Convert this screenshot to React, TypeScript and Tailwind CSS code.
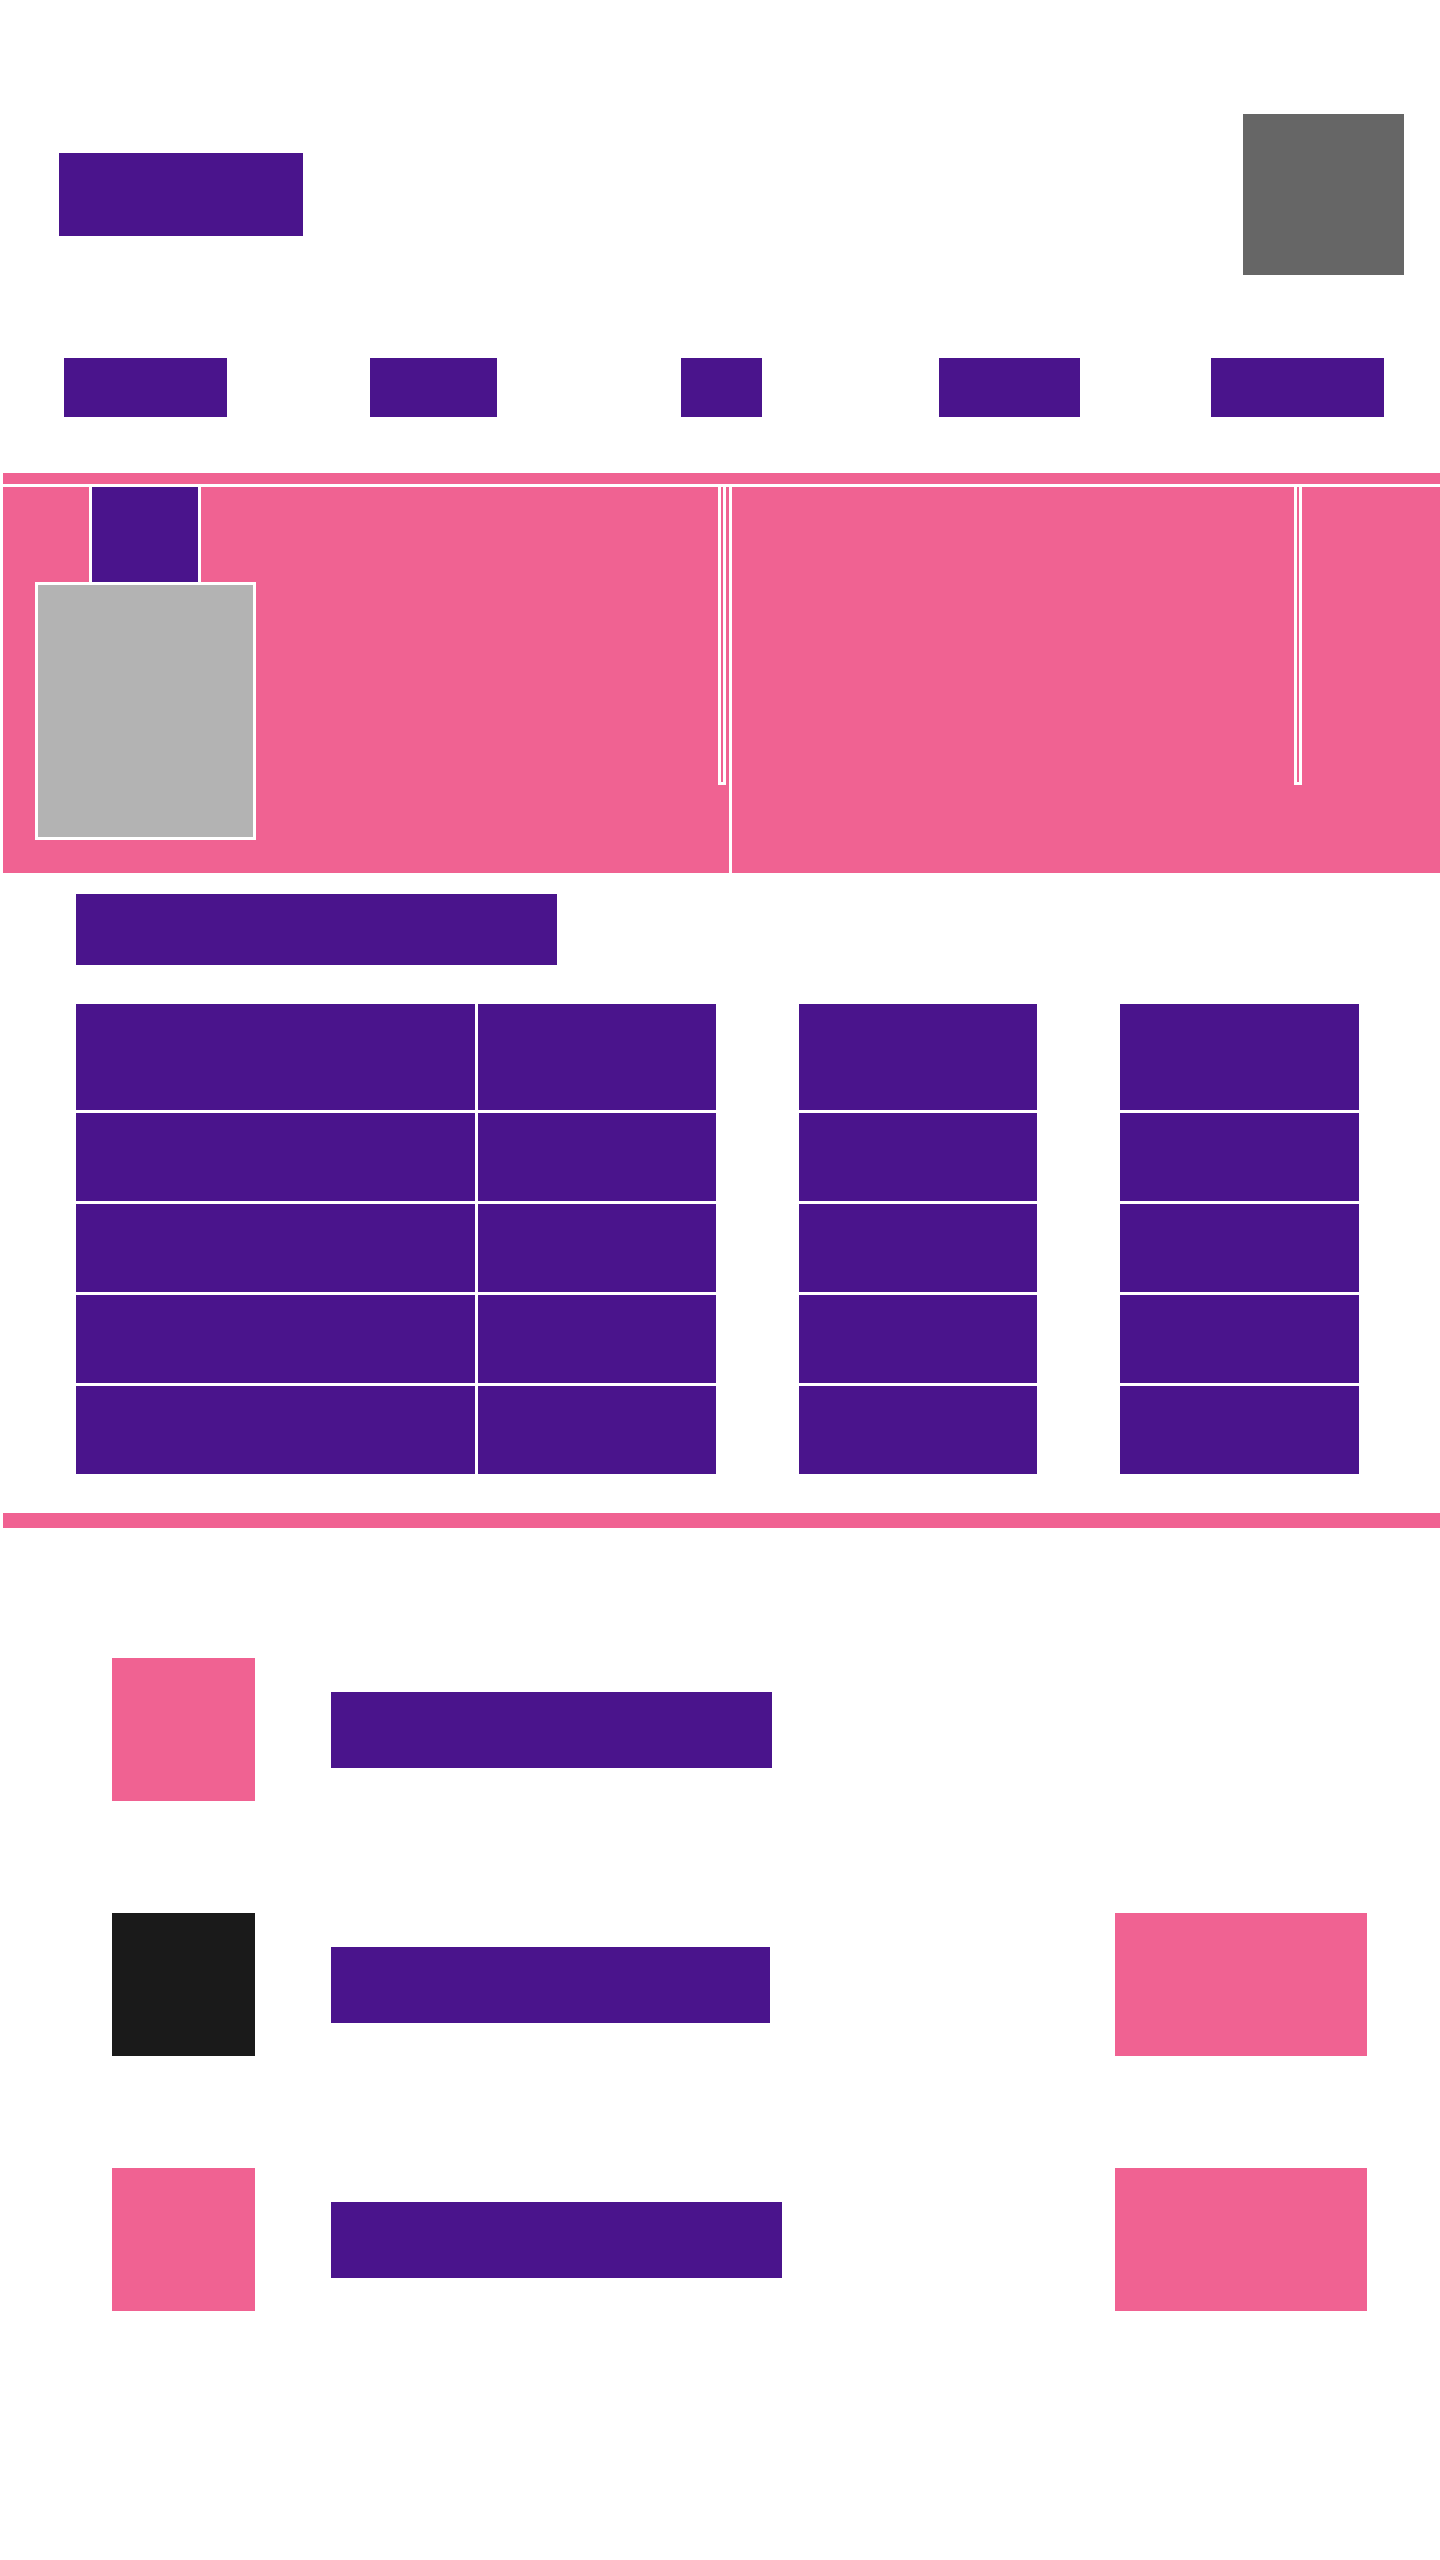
import React from 'react';

const purple = 'bg-[#4a148c]';

const navItems = [
    { w: 'w-[163px]', ml: 'ml-[64px]' },
    { w: 'w-[127px]', ml: 'ml-[143px]' },
    { w: 'w-[81px]', ml: 'ml-[184px]' },
    { w: 'w-[141px]', ml: 'ml-[177px]' },
    { w: 'w-[173px]', ml: 'ml-[131px]' },
];

const rowHeights = ['h-[106px]', 'h-[88px]', 'h-[88px]', 'h-[88px]', 'h-[88px]'];

const listItems = [
    { icon: 'bg-[#f06292]', bar: 'w-[441px]', action: false },
    { icon: 'bg-[#1a1a1a]', bar: 'w-[439px]', action: true },
    { icon: 'bg-[#f06292]', bar: 'w-[451px]', action: true },
];

const Divider = () => (
    <div className="w-[8px] h-[298px] border-x-[3px] border-b-[3px] border-white shrink-0" />
);

const App = () => {
    return (
        <div className="w-[1440px] min-h-[2560px] bg-white font-['Liberation_Sans',sans-serif]">
            {/* header */}
            <header className="pt-[114px] flex items-center justify-between pl-[59px] pr-[36px]">
                <div className={`${purple} w-[244px] h-[83px]`} />
                <div className="bg-[#666666] w-[161px] h-[161px]" />
            </header>

            {/* nav */}
            <nav className="mt-[83px] flex">
                {navItems.map((item, i) => (
                    <div key={i} className={`${purple} ${item.w} ${item.ml} h-[59px]`} />
                ))}
            </nav>

            {/* hero */}
            <section className="mt-[56px] ml-[3px]">
                <div className="bg-[#f06292] h-[11px]" />
                <div className="mt-[3px] flex h-[386px]">
                    <div className="w-[726px] bg-[#f06292] flex items-start">
                        <div className="flex flex-col">
                            <div className={`${purple} ml-[86px] w-[112px] h-[95px] border-x-[3px] border-white`} />
                            <div className="ml-[32px] w-[221px] h-[258px] bg-[#b3b3b3] border-[3px] border-white" />
                        </div>
                        <div className="ml-auto mr-[3px]">
                            <Divider />
                        </div>
                    </div>
                    <div className="w-[3px] bg-white" />
                    <div className="flex-1 bg-[#f06292] flex items-start">
                        <div className="ml-[562px]">
                            <Divider />
                        </div>
                    </div>
                </div>
            </section>

            {/* table */}
            <section className="mt-[21px] ml-[76px]">
                <div className={`${purple} w-[481px] h-[71px]`} />
                <div className="mt-[39px] flex flex-col gap-[3px]">
                    {rowHeights.map((h, i) => (
                        <div key={i} className={`flex ${h}`}>
                            <div className={`${purple} w-[399px]`} />
                            <div className={`${purple} w-[238px] ml-[3px]`} />
                            <div className={`${purple} w-[238px] ml-[83px]`} />
                            <div className={`${purple} w-[239px] ml-[83px]`} />
                        </div>
                    ))}
                </div>
            </section>

            <div className="mt-[39px] ml-[3px] h-[15px] bg-[#f06292]" />

            {/* list */}
            <section className="mt-[130px] flex flex-col gap-[112px]">
                {listItems.map((item, i) => (
                    <div key={i} className="flex items-center">
                        <div className={`${item.icon} ml-[112px] w-[143px] h-[143px] shrink-0`} />
                        <div className={`${purple} ${item.bar} ml-[76px] h-[76px]`} />
                        {item.action && (
                            <div className="ml-auto mr-[73px] w-[252px] h-[143px] bg-[#f06292]" />
                        )}
                    </div>
                ))}
            </section>
        </div>
    );
};

export default App;
